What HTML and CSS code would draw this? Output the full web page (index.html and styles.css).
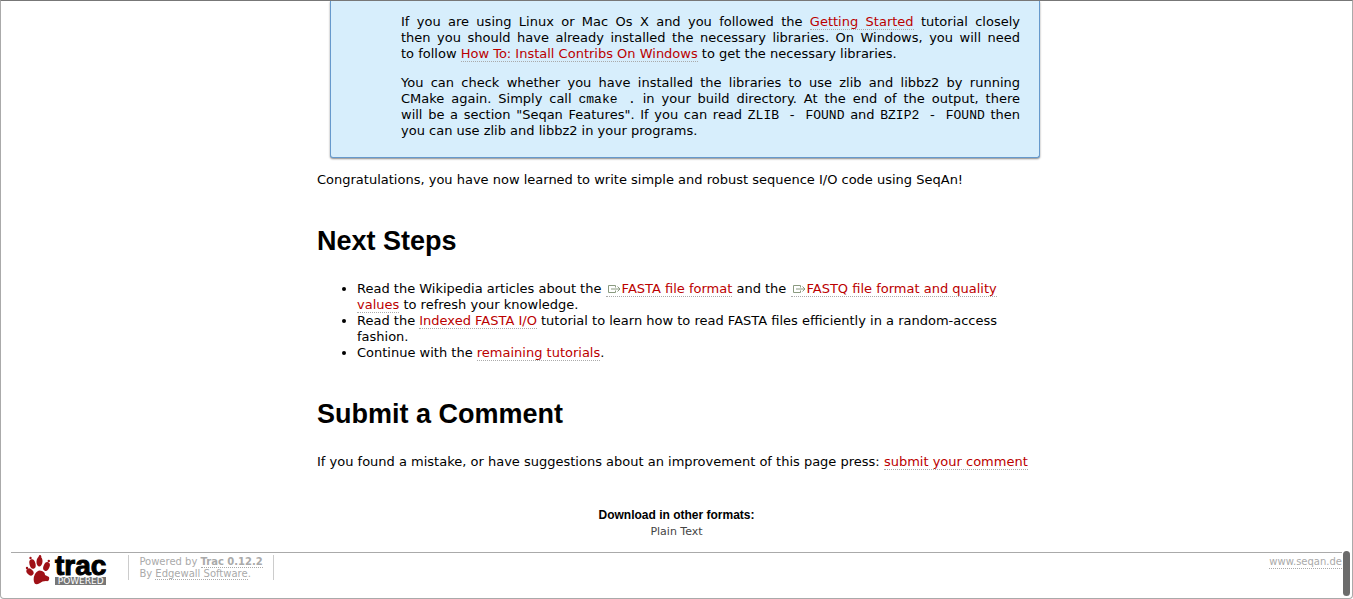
FILE: index.html
```html
<!DOCTYPE html>
<html lang="en">
<head>
<meta charset="utf-8">
<title>Basic Sequence I/O – SeqAn</title>
<link rel="stylesheet" href="styles.css">
</head>
<body>
<div class="window">
  <main class="content">
    <div class="note">
      <p>If you are using Linux or Mac Os X and you followed the <a href="#">Getting Started</a> tutorial closely<br>then you should have already installed the necessary libraries. On Windows, you will need <span class="last">to follow <a href="#">How To: Install Contribs On Windows</a> to get the necessary libraries.</span></p>
      <p>You can check whether you have installed the libraries to use zlib and libbz2 by running<br>CMake again. Simply call <code>cmake .</code> in your build directory. At the end of the output, there<br>will be a section "Seqan Features". If you can read <code>ZLIB - FOUND</code> and <code>BZIP2 - FOUND</code> then <span class="last">you can use zlib and libbz2 in your programs.</span></p>
    </div>
    <p>Congratulations, you have now learned to write simple and robust sequence I/O code using SeqAn!</p>
    <h1>Next Steps</h1>
    <ul>
      <li>Read the Wikipedia articles about the <a href="#"><svg class="ext" viewBox="0 0 16 8" aria-hidden="true"><path d="M9.500 2.500V.500H2.500V7.500H9.500V5.500M5 4H14M11.500 1.500L14 4L11.500 6.500"/></svg>FASTA file format</a> and the <a href="#"><svg class="ext" viewBox="0 0 16 8" aria-hidden="true"><path d="M9.500 2.500V.500H2.500V7.500H9.500V5.500M5 4H14M11.500 1.500L14 4L11.500 6.500"/></svg>FASTQ file format and quality<br>values</a> to refresh your knowledge.</li>
      <li>Read the <a href="#">Indexed FASTA I/O</a> tutorial to learn how to read FASTA files efficiently in a random-access<br>fashion.</li>
      <li>Continue with the <a href="#">remaining tutorials</a>.</li>
    </ul>
    <h1>Submit a Comment</h1>
    <p>If you found a mistake, or have suggestions about an improvement of this page press: <a href="#">submit your comment</a></p>
  </main>
  <section class="formats">
    <h2>Download in other formats:</h2>
    <a href="#">Plain Text</a>
  </section>
  <footer class="footer">
    <a class="logo" href="#" aria-label="Trac Powered">
      <svg class="paw" viewBox="0 0 26 30" aria-hidden="true">
        <ellipse cx="7.500" cy="9" rx="3" ry="4.800" transform="rotate(-15 7.500 9)"/>
        <ellipse cx="14.500" cy="6.500" rx="3" ry="5" transform="rotate(5 14.500 6.500)"/>
        <ellipse cx="21.500" cy="11.500" rx="3" ry="4.700" transform="rotate(22 21.500 11.500)"/>
        <ellipse cx="5" cy="17" rx="3" ry="4" transform="rotate(-45 5 17)"/>
        <circle cx="5.500" cy="3" r="1.200"/>
        <circle cx="15" cy="1.200" r="1.200"/>
        <circle cx="23.800" cy="6" r="1.200"/>
        <circle cx="2" cy="13" r="1.200"/>
        <path d="M10 19Q13 14 17 16Q20 17 20 20L24 22Q25 27 21 26Q17 26 15 28Q10 31 9 27Q8 23 10 19Z"/>
      </svg>
      <span class="wordmark"><span class="name">trac</span><span class="powered">POWERED</span></span>
    </a>
    <p class="credit">Powered by <a href="#"><strong>Trac 0.12.2</strong></a><br>By <a href="#">Edgewall Software</a>.</p>
    <a class="site" href="#">www.seqan.de</a>
  </footer>
  <div class="scrollbar"></div>
</div>
</body>
</html>
```
FILE: styles.css
```css
* { box-sizing: border-box; }
body {
  margin: 0;
  background: #fff;
  color: #000;
  font: 13px/16px Verdana, "DejaVu Sans", sans-serif;
}
a {
  color: #b00;
  text-decoration: none;
  border-bottom: 1px dotted #aaa;
}
.window {
  position: relative;
  min-height: 100vh;
  padding: 0 10px;
  border: 1px solid #aaa;
  border-top-color: #777;
  border-radius: 0 0 4px 4px;
}
.content {
  max-width: 740px;
  margin: 0 285px 0 306px;
}
.note {
  margin: 0 17px 14px 13px;
  padding: 13px 19px 18px 70px;
  border: 1px solid #69c;
  border-top: 0;
  border-radius: 0 0 3px 3px;
  background: #d7eefc;
  box-shadow: 0 1px 2px #888;
  text-align: justify;
  text-align-last: justify;
}
.last { display: block; text-align-last: left; }
p { margin: 0 0 13px; }
.note p:last-child { margin-bottom: 0; }
code { font: 13px/1px "Liberation Mono", monospace; }
h1 {
  margin: 37px 0 24px;
  font: bold 27px/32px "Liberation Sans", Arial, sans-serif;
}
ul { margin: 0; padding-left: 40px; }
.ext {
  width: 16px;
  height: 8px;
  fill: none;
  stroke: #8a9a80;
}
.formats {
  padding-top: 24px;
  text-align: center;
  font-size: 11px;
}
.formats h2 {
  margin: 0 0 1px;
  font: bold 12px/16px "Liberation Sans", Arial, sans-serif;
}
.formats a { color: #444; border: 0; }
.footer {
  display: flex;
  align-items: flex-start;
  margin-top: 12px;
  border-top: 1px solid #aaa;
  padding-top: 2px;
  color: #aaa;
  font-size: 10px;
  line-height: 12px;
}
.footer a { color: #aaa; }
.footer .logo {
  display: flex;
  margin: 0 22px 0 14px;
  border: 0;
}
.paw { width: 26px; height: 30px; fill: #9f1117; }
.wordmark { display: flex; flex-direction: column; margin-left: 4px; }
.name {
  color: #000;
  font: bold 28px/22px "Liberation Sans", Arial, sans-serif;
  -webkit-text-stroke: 1px #000;
}
.powered {
  background: #777;
  color: #fff;
  text-align: center;
  font: 9px/8px "DejaVu Sans", sans-serif;
}
.credit {
  margin: 0;
  padding: 1px 10px 0;
  border: solid #ccc;
  border-width: 0 1px;
}
.site { margin: 1px 0 0 auto; }
.scrollbar {
  position: absolute;
  right: 2px;
  bottom: 2px;
  width: 7px;
  height: 45px;
  border-radius: 4px;
  background: #6b6b6b;
}
```
